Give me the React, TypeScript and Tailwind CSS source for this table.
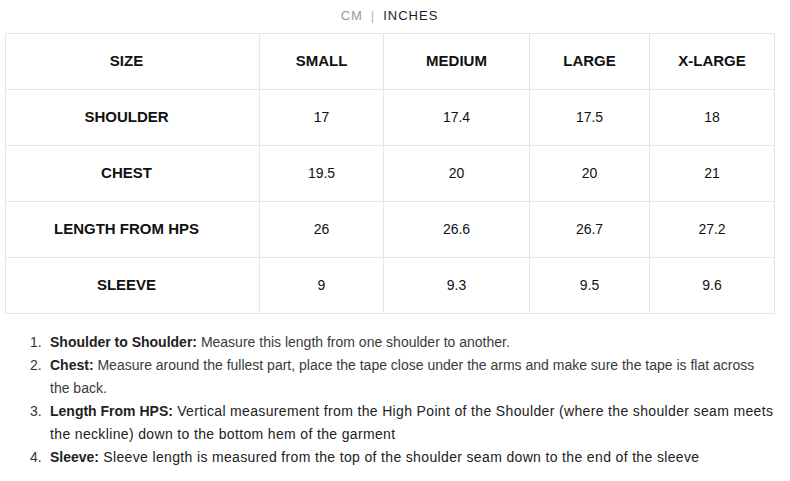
import React from "react";

const heads = ["SIZE", "SMALL", "MEDIUM", "LARGE", "X-LARGE"];
const widths = ["w-[254px]", "w-[124px]", "w-[146px]", "w-[120px]", "w-[125px]"];
const rows = [
  ["SHOULDER", "17", "17.4", "17.5", "18"],
  ["CHEST", "19.5", "20", "20", "21"],
  ["LENGTH FROM HPS", "26", "26.6", "26.7", "27.2"],
  ["SLEEVE", "9", "9.3", "9.5", "9.6"],
];

const notes: { b: string; t: string; wide: boolean }[] = [
  { b: "Shoulder to Shoulder:", t: " Measure this length from one shoulder to another.", wide: false },
  { b: "Chest:", t: " Measure around the fullest part, place the tape close under the arms and make sure the tape is flat across the back.", wide: false },
  { b: "Length From HPS:", t: " Vertical measurement from the High Point of the Shoulder (where the shoulder seam meets the neckline) down to the bottom hem of the garment", wide: true },
  { b: "Sleeve:", t: " Sleeve length is measured from the top of the shoulder seam down to the end of the sleeve", wide: true },
];

export default function App() {
  return (
    <div className="w-[790px] h-[481px] bg-white" style={{ fontFamily: '"Liberation Sans", Arial, sans-serif' }}>
      <div className="ml-[5px] w-[769px] flex justify-center items-center h-[33px] pb-[1px] text-[13px] tracking-[1px]">
        <span className="text-[#9a9a9a]">CM</span>
        <span className="mx-[8px] text-[#b5b5b5]">|</span>
        <span className="text-[#1c1b2e]">INCHES</span>
      </div>
      <table className="ml-[5px] w-[769px] border-collapse table-fixed text-[14px] text-[#111]">
        <thead>
          <tr>
            {heads.map((h, i) => (
              <th
                key={h}
                className={`${widths[i]} h-[56px] border border-[#e6e6e6] font-bold text-[15px] text-center p-0 ${i === 0 ? "pr-[12px]" : ""}`}
              >
                {h}
              </th>
            ))}
          </tr>
        </thead>
        <tbody>
          {rows.map((r) => (
            <tr key={r[0]}>
              {r.map((c, i) => (
                <td
                  key={i}
                  className={`h-[56px] border border-[#e6e6e6] text-center p-0 ${i === 0 ? "font-bold text-[15px] pr-[12px]" : "font-normal"}`}
                >
                  {c}
                </td>
              ))}
            </tr>
          ))}
        </tbody>
      </table>
      <ol className="mt-[17px] pl-[30px] pr-[15px] text-[14px] leading-[23px]">
        {notes.map((n, i) => (
          <li key={n.b} className={`flex ${n.wide ? "text-[#222]" : "text-[#3a3a3a]"}`}>
            <span className="w-[20px] shrink-0 text-[#333]">{i + 1}.</span>
            <span className="flex-1">
              <b className="text-[#222]">{n.b}</b>
              <span className={n.wide ? "tracking-[0.35px]" : ""}>{n.t}</span>
            </span>
          </li>
        ))}
      </ol>
    </div>
  );
}
